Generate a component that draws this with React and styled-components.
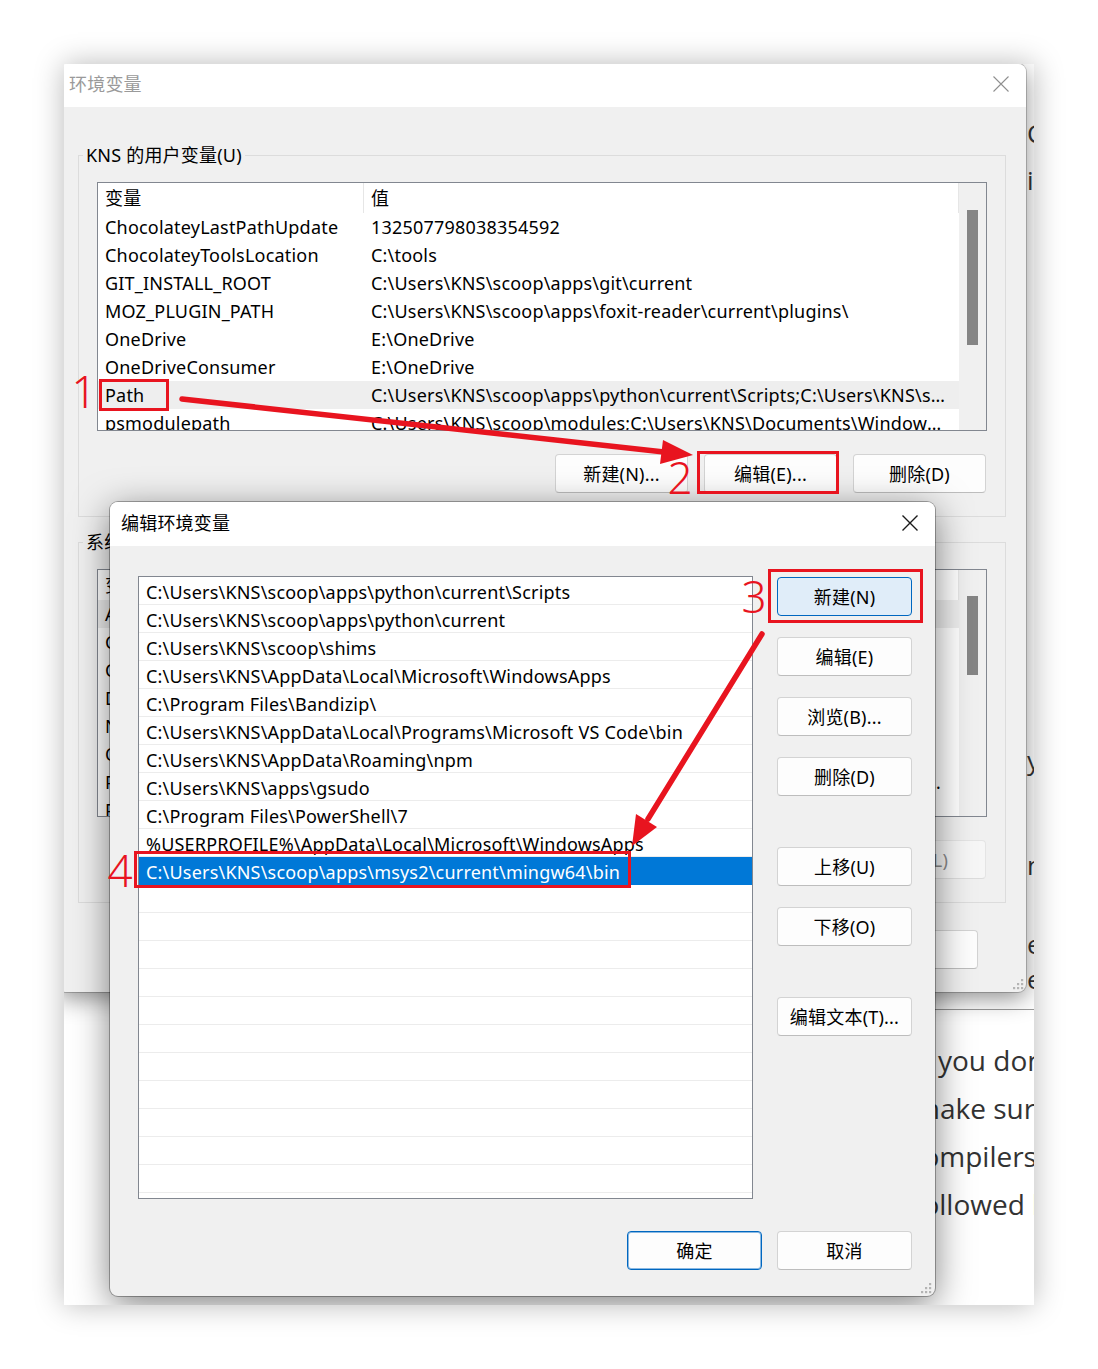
import React from 'react';
import styled, { createGlobalStyle } from 'styled-components';

const GlobalStyle = createGlobalStyle`
  html, body { margin: 0; padding: 0; background: #ffffff; }
  body {
    width: 1098px; height: 1369px; overflow: hidden;
    font-family: "Noto Sans", "Noto Sans CJK SC", sans-serif;
  }
  * { box-sizing: border-box; }
`;

const RED = '#e8141f';

const Canvas = styled.div`
  padding: 64px 0 0 64px;
  width: 1098px;
  height: 1369px;
`;

const Shot = styled.div`
  position: relative;
  width: 970px;
  height: 1241px;
  overflow: hidden;
  background: #ffffff;
  box-shadow: 0 0 28px rgba(0, 0, 0, 0.28);
`;

/* ---------- background web page ---------- */
const Page = styled.div`
  display: flex;
  flex-direction: column;
  height: 100%;
  font-family: "Open Sans", "Noto Sans", sans-serif;
  color: #333333;
`;

const EdgeGlyph = styled.div`
  margin-top: ${p => p.$mt}px;
  padding-left: 963px;
  font-size: 26px;
  line-height: 30px;
  white-space: nowrap;
`;

const PageRule = styled.div`
  margin-top: ${p => p.$mt}px;
  margin-left: 860px;
  height: 1px;
  background: #9a9a9a;
  flex: none;
`;

const PageText = styled.div`
  margin-top: 26px;
  padding-left: 874px;
  display: flex;
  flex-direction: column;
`;

const PageLine = styled.div`
  margin-left: ${p => p.$shift || 0}px;
  font-size: 28px;
  line-height: 48px;
  white-space: nowrap;
`;

/* ---------- windows ---------- */
const Window = styled.div`
  position: absolute;
  left: ${p => p.$x}px;
  top: ${p => p.$y}px;
  width: ${p => p.$w}px;
  height: ${p => p.$h}px;
  display: flex;
  flex-direction: column;
  background: #f0f0f0;
  border-radius: 8px;
  overflow: hidden;
  font-size: 18px;
  letter-spacing: 0.2px;
  color: #000000;
  box-shadow: ${p => p.$shadow};
`;

const TitleBar = styled.div`
  flex: none;
  height: ${p => p.$h}px;
  background: #ffffff;
  display: flex;
  align-items: center;
  justify-content: space-between;
  padding: 0 0 ${p => p.$pb || 0}px 11px;
`;

const TitleText = styled.div`
  font-size: 18px;
  line-height: 24px;
  color: ${p => (p.$inactive ? '#9a9a9a' : '#000000')};
`;

const CloseBox = styled.div`
  width: 50px;
  height: 100%;
  display: flex;
  align-items: center;
  justify-content: center;
`;

const CloseIcon = ({ color, w }) => (
  <svg width="16" height="16" viewBox="0 0 16 16">
    <path d="M0.5 0.5 L15.5 15.5 M15.5 0.5 L0.5 15.5" stroke={color} strokeWidth={w} fill="none" />
  </svg>
);

const OuterBody = styled.div`
  flex: 1;
  display: flex;
  flex-direction: column;
  padding: 48px 20px 23px 20px;
`;

const Group = styled.div`
  display: flex;
  flex-direction: column;
  margin-top: ${p => p.$mt || 0}px;
  border: 1px solid #dcdcdc;
  padding: 0 18px 23px 18px;
`;

const GroupLabel = styled.div`
  align-self: flex-start;
  margin: -13px 0 15px -14px;
  padding: 0 3px;
  background: #f0f0f0;
  line-height: 24px;
  white-space: nowrap;
`;

const ListBox = styled.div`
  display: flex;
  height: ${p => p.$h}px;
  border: 1px solid #828790;
  background: #ffffff;
  overflow: hidden;
  flex: none;
`;

const Table = styled.div`
  flex: 1;
  min-width: 0;
  display: flex;
  flex-direction: column;
`;

const HeadRow = styled.div`
  flex: none;
  display: grid;
  grid-template-columns: 266px 1fr;
  height: 30px;
`;

const HeadCell = styled.div`
  padding: 1px 0 0 7px;
  line-height: 29px;
  border-right: 1px solid #e6e6e6;
`;

const VarRow = styled.div`
  flex: none;
  display: grid;
  grid-template-columns: 266px 1fr;
  height: 28px;
  background: ${p => (p.$hl ? '#eeeeee' : 'transparent')};
`;

const VarCell = styled.div`
  padding: 1px 14px 0 7px;
  line-height: 27px;
  white-space: nowrap;
  overflow: hidden;
  text-overflow: ellipsis;
`;

const ScrollTrack = styled.div`
  flex: none;
  width: 27px;
  background: #f0f0f0;
  padding: ${p => p.$top}px 0 0 8px;
`;

const Thumb = styled.div`
  width: 11px;
  height: ${p => p.$h}px;
  background: #858585;
`;

const ButtonRow = styled.div`
  display: flex;
  justify-content: flex-end;
  gap: ${p => p.$gap || 16}px;
  margin-top: ${p => p.$mt || 0}px;
  padding-right: ${p => p.$pr || 0}px;
`;

const Btn = styled.div`
  flex: none;
  width: ${p => p.$w || 133}px;
  height: 39px;
  margin-top: ${p => p.$mt || 0}px;
  padding-bottom: 2px;
  display: flex;
  align-items: center;
  justify-content: center;
  white-space: nowrap;
  border-radius: 4px;
  color: ${p => (p.$disabled ? '#8a8a8a' : '#000000')};
  background: ${p => (p.$accent ? '#e0edf9' : p.$disabled ? '#f6f6f6' : '#fdfdfd')};
  border: 1px solid ${p => (p.$accent || p.$default ? '#0067c0' : p.$disabled ? '#e4e4e4' : '#d3d3d3')};
  border-bottom-color: ${p => (p.$accent || p.$default ? '#0067c0' : p.$disabled ? '#dcdcdc' : '#bdbdbd')};
  box-shadow: ${p => (p.$default ? 'inset 0 0 0 1px rgba(0,103,192,0.45)' : 'none')};
`;

/* ---------- dialog ---------- */
const DialogBody = styled.div`
  flex: 1;
  display: flex;
  flex-direction: column;
  padding: 30px 23px 26px 28px;
`;

const MainRow = styled.div`
  display: flex;
  gap: 24px;
  align-items: flex-start;
`;

const PathList = styled.div`
  width: 615px;
  height: 623px;
  border: 1px solid #828790;
  background: #ffffff;
  overflow: hidden;
  display: flex;
  flex-direction: column;
`;

const PathRow = styled.div`
  flex: none;
  height: 28px;
  padding: 3px 0 0 7px;
  line-height: 24px;
  white-space: nowrap;
  overflow: hidden;
  border-bottom: 1px solid ${p => (p.$sel ? '#0078d7' : '#ececec')};
  background: ${p => (p.$sel ? '#0078d7' : '#ffffff')};
  color: ${p => (p.$sel ? '#ffffff' : '#000000')};
`;

const ButtonCol = styled.div`
  display: flex;
  flex-direction: column;
  padding-top: 1px;
`;

const Grip = styled.svg`
  position: absolute;
  right: ${p => p.$r}px;
  bottom: ${p => p.$b}px;
`;

const GripIcon = ({ r, b }) => (
  <Grip $r={r} $b={b} width="12" height="12" viewBox="0 0 12 12">
    {[[9, 1], [9, 5], [5, 5], [9, 9], [5, 9], [1, 9]].map(([x, y]) => (
      <rect key={x + '-' + y} x={x} y={y} width="2.2" height="2.2" fill="#b4b4b4" />
    ))}
  </Grip>
);

/* ---------- annotations ---------- */
const Overlay = styled.svg`
  position: absolute;
  left: 0;
  top: 0;
  pointer-events: none;
`;

const Num = styled.div`
  position: absolute;
  left: ${p => p.$x}px;
  top: ${p => p.$y}px;
  width: 25px;
  text-align: center;
  font-family: "Noto Sans", sans-serif;
  font-weight: 300;
  font-size: 44px;
  line-height: 44px;
  color: ${RED};
`;

const userVars = [
  ['ChocolateyLastPathUpdate', '132507798038354592'],
  ['ChocolateyToolsLocation', 'C:\\tools'],
  ['GIT_INSTALL_ROOT', 'C:\\Users\\KNS\\scoop\\apps\\git\\current'],
  ['MOZ_PLUGIN_PATH', 'C:\\Users\\KNS\\scoop\\apps\\foxit-reader\\current\\plugins\\'],
  ['OneDrive', 'E:\\OneDrive'],
  ['OneDriveConsumer', 'E:\\OneDrive'],
  ['Path', 'C:\\Users\\KNS\\scoop\\apps\\python\\current\\Scripts;C:\\Users\\KNS\\scoop\\shims;C:\\Users'],
  ['psmodulepath', 'C:\\Users\\KNS\\scoop\\modules;C:\\Users\\KNS\\Documents\\WindowsPowerShell\\Modules'],
];

const sysVars = [
  ['ACSvcPort', '17532'],
  ['ChocolateyInstall', 'C:\\ProgramData\\chocolatey'],
  ['ComSpec', 'C:\\Windows\\system32\\cmd.exe'],
  ['DriverData', 'C:\\Windows\\System32\\Drivers\\DriverData'],
  ['NUMBER_OF_PROCESSORS', '16'],
  ['OS', 'Windows_NT'],
  ['Path', 'C:\\Program Files\\Common Files\\Oracle\\Java\\javapath;C:\\Windows\\system32;C:\\Windows;C:\\Windows\\System32\\Wbem;C:\\Windows'],
  ['PATHEXT', '.COM;.EXE;.BAT;.CMD;.VBS;.VBE;.JS;.JSE;.WSF;.WSH;.MSC'],
];

const paths = [
  'C:\\Users\\KNS\\scoop\\apps\\python\\current\\Scripts',
  'C:\\Users\\KNS\\scoop\\apps\\python\\current',
  'C:\\Users\\KNS\\scoop\\shims',
  'C:\\Users\\KNS\\AppData\\Local\\Microsoft\\WindowsApps',
  'C:\\Program Files\\Bandizip\\',
  'C:\\Users\\KNS\\AppData\\Local\\Programs\\Microsoft VS Code\\bin',
  'C:\\Users\\KNS\\AppData\\Roaming\\npm',
  'C:\\Users\\KNS\\apps\\gsudo',
  'C:\\Program Files\\PowerShell\\7',
  '%USERPROFILE%\\AppData\\Local\\Microsoft\\WindowsApps',
  'C:\\Users\\KNS\\scoop\\apps\\msys2\\current\\mingw64\\bin',
];

const VarList = ({ rows, hl, thumbTop, thumbH, h }) => (
  <ListBox $h={h}>
    <Table>
      <HeadRow>
        <HeadCell>变量</HeadCell>
        <HeadCell>值</HeadCell>
      </HeadRow>
      {rows.map(([k, v], i) => (
        <VarRow key={k + i} $hl={i === hl}>
          <VarCell>{k}</VarCell>
          <VarCell>{v}</VarCell>
        </VarRow>
      ))}
    </Table>
    <ScrollTrack $top={thumbTop}>
      <Thumb $h={thumbH} />
    </ScrollTrack>
  </ListBox>
);

export default function App() {
  const emptyRows = Array.from({ length: 12 });
  return (
    <>
      <GlobalStyle />
      <Canvas>
        <Shot>
          <Page>
            <EdgeGlyph $mt={54}>Co</EdgeGlyph>
            <EdgeGlyph $mt={17}>in</EdgeGlyph>
            <EdgeGlyph $mt={550}>yo</EdgeGlyph>
            <EdgeGlyph $mt={75}>ne</EdgeGlyph>
            <EdgeGlyph $mt={49}>ex</EdgeGlyph>
            <EdgeGlyph $mt={5}>ec</EdgeGlyph>
            <PageRule $mt={15} />
            <PageText>
              <PageLine>you don't need to</PageLine>
              <PageLine $shift={-24}>make sure the</PageLine>
              <PageLine $shift={-29}>compilers are</PageLine>
              <PageLine $shift={-25}>followed by</PageLine>
            </PageText>
          </Page>

          {/* 环境变量 window */}
          <Window
            $x={-6}
            $y={0}
            $w={968}
            $h={928}
            $shadow="0 0 0 1px rgba(0,0,0,0.2), 0 6px 24px rgba(0,0,0,0.45)"
          >
            <TitleBar $h={43} $pb={3}>
              <TitleText $inactive>环境变量</TitleText>
              <CloseBox>
                <CloseIcon color="#8f8f8f" w={1.1} />
              </CloseBox>
            </TitleBar>
            <OuterBody>
              <Group>
                <GroupLabel>KNS 的用户变量(U)</GroupLabel>
                <VarList rows={userVars} hl={6} thumbTop={27} thumbH={135} h={249} />
                <ButtonRow $mt={23} $pr={1}>
                  <Btn>新建(N)...</Btn>
                  <Btn>编辑(E)...</Btn>
                  <Btn>删除(D)</Btn>
                </ButtonRow>
              </Group>
              <Group $mt={25}>
                <GroupLabel>系统变量(S)</GroupLabel>
                <VarList rows={sysVars} hl={0} thumbTop={26} thumbH={79} h={248} />
                <ButtonRow $mt={23} $pr={1}>
                  <Btn>新建(W)...</Btn>
                  <Btn>编辑(I)...</Btn>
                  <Btn $disabled>删除(L)</Btn>
                </ButtonRow>
              </Group>
              <ButtonRow $mt={27} $pr={28} $gap={15}>
                <Btn $w={134}>确定</Btn>
                <Btn $w={134}>取消</Btn>
              </ButtonRow>
            </OuterBody>
            <GripIcon r={2} b={2} />
          </Window>

          {/* 编辑环境变量 dialog */}
          <Window
            $x={46}
            $y={438}
            $w={825}
            $h={794}
            $shadow="0 0 0 1px rgba(0,0,0,0.3), 0 8px 36px rgba(0,0,0,0.5)"
          >
            <TitleBar $h={44} $pb={2}>
              <TitleText>编辑环境变量</TitleText>
              <CloseBox>
                <CloseIcon color="#1a1a1a" w={1.4} />
              </CloseBox>
            </TitleBar>
            <DialogBody>
              <MainRow>
                <PathList>
                  {paths.map((p, i) => (
                    <PathRow key={p} $sel={i === paths.length - 1}>{p}</PathRow>
                  ))}
                  {emptyRows.map((_, i) => (
                    <PathRow key={'e' + i}>&nbsp;</PathRow>
                  ))}
                </PathList>
                <ButtonCol>
                  <Btn $w={135} $accent>新建(N)</Btn>
                  <Btn $w={135} $mt={21}>编辑(E)</Btn>
                  <Btn $w={135} $mt={21}>浏览(B)...</Btn>
                  <Btn $w={135} $mt={21}>删除(D)</Btn>
                  <Btn $w={135} $mt={51}>上移(U)</Btn>
                  <Btn $w={135} $mt={21}>下移(O)</Btn>
                  <Btn $w={135} $mt={51}>编辑文本(T)...</Btn>
                </ButtonCol>
              </MainRow>
              <ButtonRow $mt={32} $gap={15}>
                <Btn $w={135} $default>确定</Btn>
                <Btn $w={135}>取消</Btn>
              </ButtonRow>
            </DialogBody>
            <GripIcon r={3} b={2} />
          </Window>

          {/* red annotations */}
          <Overlay width="970" height="1241" viewBox="0 0 970 1241">
            <g fill="none" stroke={RED} strokeWidth="3">
              <rect x="36.5" y="316.5" width="67" height="29" />
              <rect x="634.5" y="388.5" width="139" height="40" />
              <rect x="705.5" y="506.5" width="152" height="51" />
              <rect x="71.5" y="788.5" width="494" height="34" />
            </g>
            <g stroke={RED} strokeWidth="5.5" strokeLinecap="round">
              <line x1="118" y1="335" x2="600" y2="388" />
              <line x1="698" y1="570" x2="584" y2="755" />
            </g>
            <g fill={RED}>
              <polygon points="629,391 596,400 599,376" />
              <polygon points="568,782 593,763 572,750" />
            </g>
          </Overlay>
          <Num $x={7.5} $y={305}>1</Num>
          <Num $x={603.5} $y={391}>2</Num>
          <Num $x={677.5} $y={510}>3</Num>
          <Num $x={43.5} $y={784}>4</Num>
        </Shot>
      </Canvas>
    </>
  );
}
